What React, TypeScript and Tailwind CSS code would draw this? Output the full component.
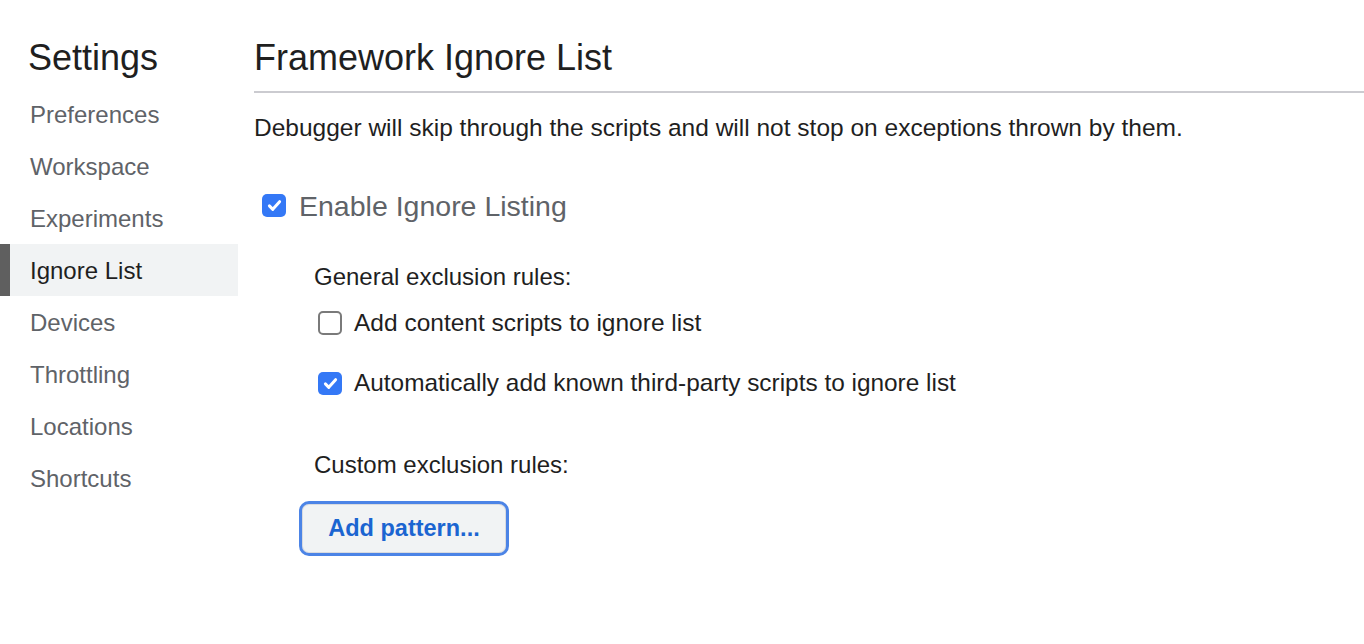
import React from "react";

function Check({ checked, className = "" }: { checked: boolean; className?: string }) {
  if (checked) {
    return (
      <div className={"flex h-[23px] w-[24px] shrink-0 items-center justify-center rounded-[5px] bg-[#3478f6] " + className}>
        <svg width="17" height="17" viewBox="0 0 16 16" fill="none">
          <path d="M3.2 8.4 L6.4 11.6 L12.8 4.4" stroke="#ffffff" strokeWidth="2.8" strokeLinecap="round" strokeLinejoin="round" />
        </svg>
      </div>
    );
  }
  return <div className={"h-[24px] w-[24px] shrink-0 rounded-[5px] border-2 border-[#7a7a7a] bg-white " + className} />;
}

const items = ["Preferences", "Workspace", "Experiments", "Ignore List", "Devices", "Throttling", "Locations", "Shortcuts"];

export default function App() {
  return (
    <div className="flex h-[644px] w-[1364px] bg-white text-[#202124]" style={{ fontFamily: '"Liberation Sans", Arial, sans-serif' }}>
      <aside className="w-[238px] shrink-0">
        <h1 className="mt-[40px] mb-[12px] pl-[28px] text-[36px] leading-[36px] text-[#1f1f1f]">Settings</h1>
        <nav className="flex flex-col">
          {items.map((it) => {
            const sel = it === "Ignore List";
            return (
              <div
                key={it}
                className={
                  sel
                    ? "h-[52px] border-l-[10px] border-[#5f5f5f] bg-[#f1f3f4] pl-[20px] text-[24px] leading-[54px] text-[#1f1f1f]"
                    : "h-[52px] pl-[30px] text-[24px] leading-[54px] text-[#5f6368]"
                }
              >
                {it}
              </div>
            );
          })}
        </nav>
      </aside>
      <main className="flex-1 pl-[16px]">
        <h2 className="mt-[40px] text-[36px] leading-[36px] text-[#1f1f1f]">Framework Ignore List</h2>
        <div className="mt-[15px] h-[2px] bg-[#cbcbd0]" />
        <p className="mt-[23px] text-[24.5px] leading-[24px] text-[#1f1f1f]">
          Debugger will skip through the scripts and will not stop on exceptions thrown by them.
        </p>
        <div className="mt-[50px] flex items-center pl-[8px]">
          <Check checked />
          <span className="ml-[13px] pt-[1px] text-[28.5px] leading-[30px] text-[#5f6368]">Enable Ignore Listing</span>
        </div>
        <div className="pl-[60px]">
          <div className="mt-[44px] text-[24px] leading-[24px] text-[#1f1f1f]">General exclusion rules:</div>
          <div className="mt-[22px] flex items-center pl-[4px]">
            <Check checked={false} />
            <span className="ml-[12px] text-[24.5px] leading-[24px] text-[#1f1f1f]">Add content scripts to ignore list</span>
          </div>
          <div className="mt-[36px] flex items-center pl-[4px]">
            <Check checked />
            <span className="ml-[12px] text-[24.4px] leading-[24px] text-[#1f1f1f]">Automatically add known third-party scripts to ignore list</span>
          </div>
          <div className="mt-[58px] text-[24px] leading-[24px] text-[#1f1f1f]">Custom exclusion rules:</div>
        </div>
        <div className="mt-[24px] pl-[45px]">
          <button className="flex h-[55px] w-[210px] items-center justify-center rounded-[10px] border-[3px] border-[#4c84e6] bg-[#f1f3f4] text-[23.5px] font-semibold text-[#1b65d1] shadow-[inset_0_0_0_1px_#d9dbdf]">
            Add pattern...
          </button>
        </div>
      </main>
    </div>
  );
}
